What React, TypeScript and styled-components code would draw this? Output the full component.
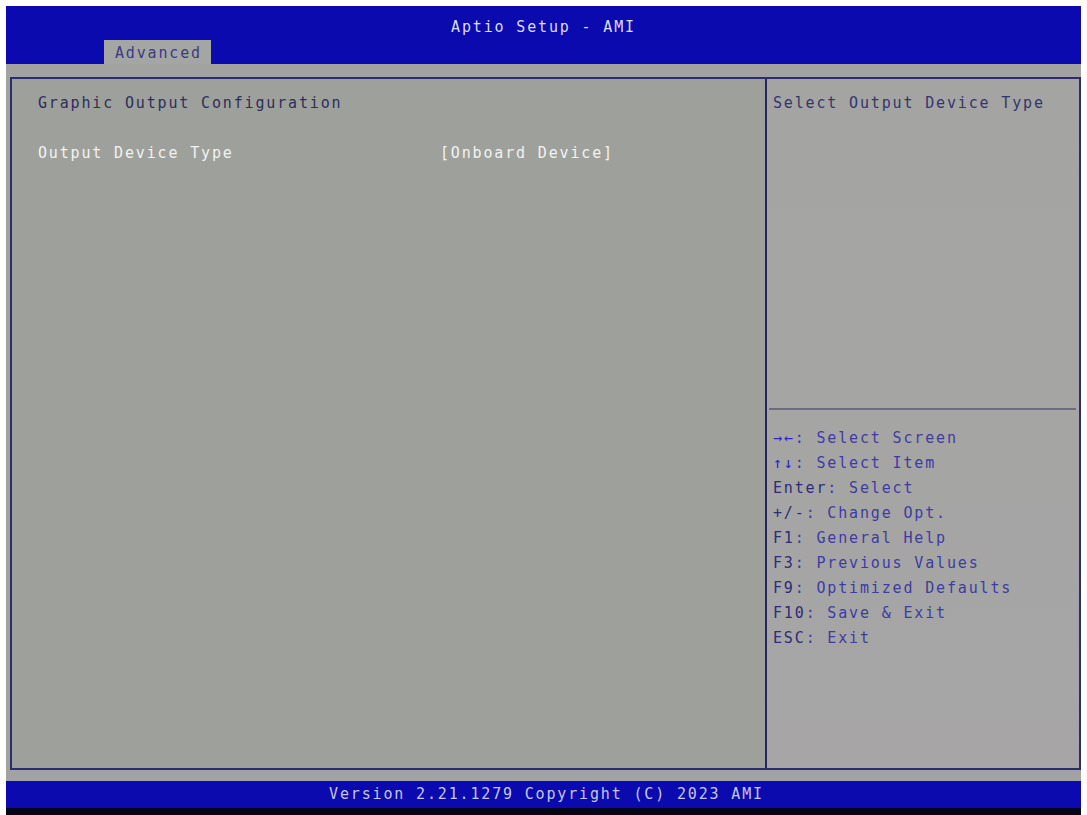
import React from 'react';
import styled, { createGlobalStyle } from 'styled-components';

const GlobalStyle = createGlobalStyle`
  html, body {
    margin: 0;
    padding: 0;
    background: #ffffff;
  }
  body {
    font-family: 'DejaVu Sans Mono', 'Liberation Mono', monospace;
    font-size: 15px;
    letter-spacing: 1.84px;
  }
`;

const helpKeys = [
  { key: '→←', text: ': Select Screen', bright: true },
  { key: '↑↓', text: ': Select Item', bright: true },
  { key: 'Enter', text: ': Select' },
  { key: '+/-', text: ': Change Opt.' },
  { key: 'F1', text: ': General Help' },
  { key: 'F3', text: ': Previous Values' },
  { key: 'F9', text: ': Optimized Defaults' },
  { key: 'F10', text: ': Save & Exit' },
  { key: 'ESC', text: ': Exit' },
];

const App: React.FC = () => {
  return (
    <Screen>
      <GlobalStyle />
      <Header>
        <Title>Aptio Setup - AMI</Title>
        <TabRow>
          <Tab>Advanced</Tab>
        </TabRow>
      </Header>

      <Body>
        <Panel>
          <MainColumn>
            <Heading>Graphic Output Configuration</Heading>
            <SettingRow>
              <Label>Output Device Type</Label>
              <Value>[Onboard Device]</Value>
            </SettingRow>
          </MainColumn>

          <SideColumn>
            <HelpText>Select Output Device Type</HelpText>
            <Divider />
            <KeyList>
              {helpKeys.map((k) => (
                <KeyLine key={k.key}>
                  <KeyName $bright={k.bright}>{k.key}</KeyName>
                  {k.text}
                </KeyLine>
              ))}
            </KeyList>
          </SideColumn>
        </Panel>
      </Body>

      <Footer>Version 2.21.1279 Copyright (C) 2023 AMI</Footer>
      <BottomEdge />
    </Screen>
  );
};

export default App;

const Screen = styled.div`
  height: 815px;
  box-sizing: border-box;
  padding: 6px 6px 0 6px;
  display: flex;
  flex-direction: column;
  overflow: hidden;
`;

const Header = styled.header`
  height: 58px;
  background: #0a0aae;
  display: flex;
  flex-direction: column;
  justify-content: space-between;
`;

const Title = styled.div`
  text-align: center;
  color: #dcdcf2;
  line-height: 20px;
  padding-top: 11px;
`;

const TabRow = styled.div`
  display: flex;
  padding-left: 98px;
`;

const Tab = styled.div`
  width: 107px;
  height: 24px;
  box-sizing: border-box;
  padding: 2px 0 0 11px;
  line-height: 22px;
  background: #a4a6a4;
  color: #3a3a86;
`;

const Body = styled.main`
  flex: 1;
  background: #a2a3a0;
  padding: 13px 0 11px 4px;
  display: flex;
`;

const Panel = styled.section`
  flex: 1;
  display: flex;
  border: 2px solid #2c2c6e;
`;

const MainColumn = styled.div`
  width: 755px;
  background: #9ea19b;
  padding: 12px 0 0 26px;
  box-sizing: border-box;
  border-right: 2px solid #24246a;
  line-height: 25px;
`;

const Heading = styled.div`
  color: #2e2e5a;
`;

const SettingRow = styled.div`
  display: flex;
  margin-top: 25px;
  color: #f2f2f2;
`;

const Label = styled.div`
  width: 402px;
`;

const Value = styled.div``;

const SideColumn = styled.aside`
  flex: 1;
  background: linear-gradient(180deg, #a4a5a2 0%, #a7a5a6 100%);
  display: flex;
  flex-direction: column;
  line-height: 25px;
`;

const HelpText = styled.div`
  height: 329px;
  padding: 12px 0 0 6px;
  box-sizing: border-box;
  color: #34346e;
`;

const Divider = styled.div`
  height: 2px;
  background: #6c6c7a;
  margin: 0 3px 0 2px;
`;

const KeyList = styled.div`
  padding: 16px 0 0 6px;
`;

const KeyLine = styled.div`
  color: #3c3ca4;
`;

const KeyName = styled.span<{ $bright?: boolean }>`
  color: ${(p) => (p.$bright ? '#2424d8' : '#2c2c78')};
`;

const Footer = styled.footer`
  height: 27px;
  background: #0a0aae;
  color: #c6c6e6;
  text-align: center;
  line-height: 27px;
  padding-left: 6px;
`;

const BottomEdge = styled.div`
  height: 7px;
  background: #05051a;
`;
